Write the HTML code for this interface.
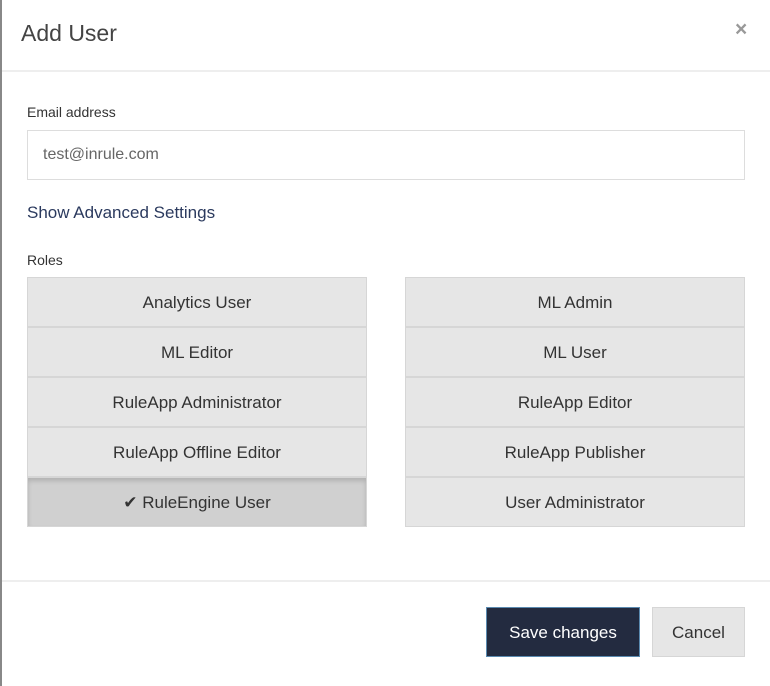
<!DOCTYPE html>
<html><head><style>
body{margin:0;width:770px;height:686px;background:#fff;font-family:"Liberation Sans",sans-serif;position:relative;overflow:hidden;color:#333}
.lb{position:absolute;left:0;top:0;width:2px;height:686px;background:#888}
.t{position:absolute;left:21px;top:20px;font-size:23px;color:#444}
.x{position:absolute;left:735px;top:18px;font-size:21px;color:#999;font-weight:bold}
.hr{position:absolute;left:2px;right:0;height:2px;background:#eee}
.l{position:absolute;left:27px;font-size:14px;color:#333}
.in{position:absolute;left:27px;top:130px;width:716px;height:48px;border:1px solid #ddd;box-sizing:content-box}
.in span{position:absolute;left:15px;top:15px;font-size:16px;color:#666}
.adv{position:absolute;left:27px;top:203px;font-size:17px;color:#2b3a5e}
.b{position:absolute;width:338px;height:48px;background:#e6e6e6;border:1px solid #d6d6d6;text-align:center;line-height:50px;font-size:17px;color:#333}
.sel{background:#d0d0d0;box-shadow:inset 0 3px 5px rgba(0,0,0,.15)}
.save{position:absolute;left:486px;top:607px;width:152px;height:48px;background:#232b40;border:1px solid #5a8ab0;color:#fff;font-size:17px;text-align:center;line-height:50px}
.can{position:absolute;left:652px;top:607px;width:91px;height:48px;background:#e6e6e6;border:1px solid #d6d6d6;color:#333;font-size:17px;text-align:center;line-height:50px}
</style></head><body>
<div class="lb"></div>
<div class="t">Add User</div>
<div class="x">×</div>
<div class="hr" style="top:70px"></div>
<div class="l" style="top:104px">Email address</div>
<div class="in"><span>test@inrule.com</span></div>
<div class="adv">Show Advanced Settings</div>
<div class="l" style="top:252px">Roles</div>
<div class="b" style="left:27px;top:277px">Analytics User</div>
<div class="b" style="left:27px;top:327px">ML Editor</div>
<div class="b" style="left:27px;top:377px">RuleApp Administrator</div>
<div class="b" style="left:27px;top:427px">RuleApp Offline Editor</div>
<div class="b sel" style="left:27px;top:477px">✔ RuleEngine User</div>
<div class="b" style="left:405px;top:277px">ML Admin</div>
<div class="b" style="left:405px;top:327px">ML User</div>
<div class="b" style="left:405px;top:377px">RuleApp Editor</div>
<div class="b" style="left:405px;top:427px">RuleApp Publisher</div>
<div class="b" style="left:405px;top:477px">User Administrator</div>
<div class="hr" style="top:580px"></div>
<div class="save">Save changes</div>
<div class="can">Cancel</div>
</body></html>
